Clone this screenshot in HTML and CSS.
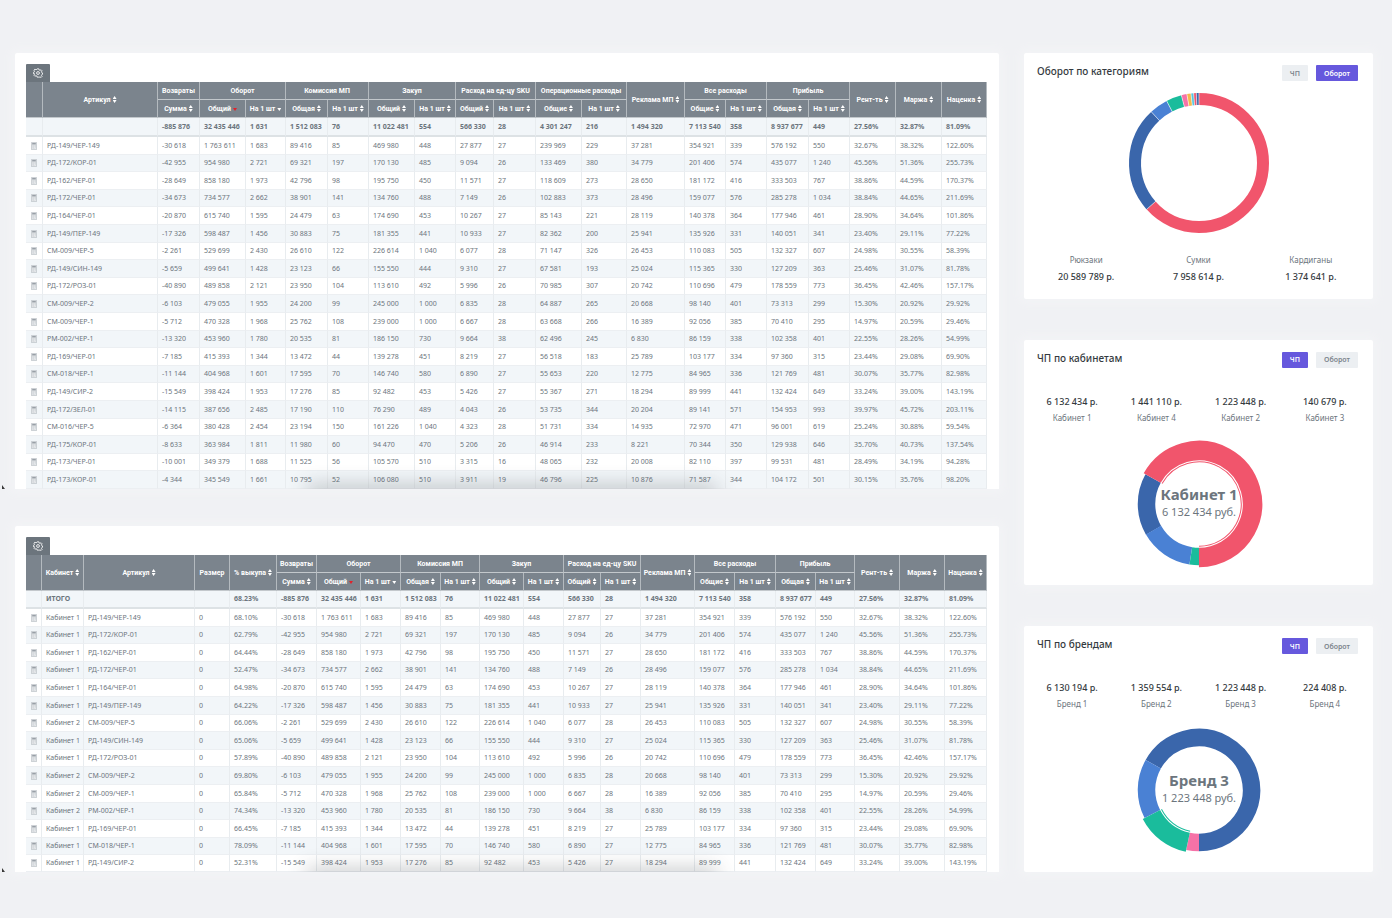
FILE: index.html
```html
<!DOCTYPE html>
<html lang="ru">
<head>
<meta charset="utf-8">
<title>Аналитика продаж</title>
<link rel="stylesheet" href="styles.css">
</head>
<body>
<svg class="sprite" aria-hidden="true">
  <symbol id="gear" viewBox="0 0 24 24">
    <path d="M10 2h4l.7 2.8 2.2.9 2.5-1.5 2.4 2.5-1.5 2.5.9 2.1 1.7.7v3l-1.7.7-.9 2.1 1.5 2.5-2.4 2.5-2.5-1.5-2.2.9L14 22h-4l-.7-2.8-2.2-.9-2.5 1.5-2.4-2.5 1.5-2.5-.9-2.1L1 13.500v-3l1.800-.7.9-2.100-1.500-2.500 2.400-2.500 2.500 1.500 2.200-.9z" fill="none" stroke="currentColor" stroke-width="2" stroke-linejoin="round"/>
    <circle cx="12" cy="12" r="3.400" fill="none" stroke="currentColor" stroke-width="2"/>
  </symbol>
  <symbol id="calc" viewBox="0 0 12 16">
    <rect x=".5" y=".5" width="11" height="15" rx="1" fill="#d3d7db" stroke="#b3b9bf"/>
    <path d="M2.500 3.500h7" stroke="#868e96" stroke-width="2"/>
    <path d="M3 8h1.500M6 8h1.500M3 10.500h1.500M6 10.500h3M3 13h1.500M7 13h2.500" stroke="#f7f9fa" stroke-width="1.300"/>
  </symbol>
</svg>

<main class="page">
  <div class="tables">
    <section class="panel">
      <div class="card table-card">
        <button class="settings" type="button" aria-label="Настройки"><svg><use href="#gear"/></svg></button>
        <table class="grid grid-articles">
          <colgroup><col><col><col><col><col><col><col><col><col><col><col><col><col><col><col><col><col><col><col><col><col></colgroup>
          <thead>
            <tr>
              <th rowspan="2"></th>
              <th rowspan="2"><button class="sort">Артикул</button></th>
              <th>Возвраты</th>
              <th colspan="2">Оборот</th>
              <th colspan="2">Комиссия МП</th>
              <th colspan="2">Закуп</th>
              <th colspan="2">Расход на ед-цу SKU</th>
              <th colspan="2">Операционные расходы</th>
              <th rowspan="2"><button class="sort">Реклама МП</button></th>
              <th colspan="2">Все расходы</th>
              <th colspan="2">Прибыль</th>
              <th rowspan="2"><button class="sort">Рент-ть</button></th>
              <th rowspan="2"><button class="sort">Маржа</button></th>
              <th rowspan="2"><button class="sort">Наценка</button></th>
            </tr>
            <tr>
              <th><button class="sort">Сумма</button></th>
              <th><button class="sort sort-down sort-active">Общий</button></th>
              <th><button class="sort sort-down">На 1 шт</button></th>
              <th><button class="sort">Общая</button></th>
              <th><button class="sort">На 1 шт</button></th>
              <th><button class="sort">Общий</button></th>
              <th><button class="sort">На 1 шт</button></th>
              <th><button class="sort">Общий</button></th>
              <th><button class="sort">На 1 шт</button></th>
              <th><button class="sort">Общие</button></th>
              <th><button class="sort">На 1 шт</button></th>
              <th><button class="sort">Общие</button></th>
              <th><button class="sort">На 1 шт</button></th>
              <th><button class="sort">Общая</button></th>
              <th><button class="sort">На 1 шт</button></th>
            </tr>
          </thead>
          <tbody id="articles"></tbody>
        </table>
      </div>
    </section>

    <section class="panel">
      <div class="card table-card">
        <button class="settings" type="button" aria-label="Настройки"><svg><use href="#gear"/></svg></button>
        <table class="grid grid-cabinets">
          <colgroup><col><col><col><col><col><col><col><col><col><col><col><col><col><col><col><col><col><col><col><col><col><col></colgroup>
          <thead>
            <tr>
              <th rowspan="2"></th>
              <th rowspan="2"><button class="sort">Кабинет</button></th>
              <th rowspan="2"><button class="sort">Артикул</button></th>
              <th rowspan="2">Размер</th>
              <th rowspan="2"><button class="sort">% выкупа</button></th>
              <th>Возвраты</th>
              <th colspan="2">Оборот</th>
              <th colspan="2">Комиссия МП</th>
              <th colspan="2">Закуп</th>
              <th colspan="2">Расход на ед-цу SKU</th>
              <th rowspan="2"><button class="sort">Реклама МП</button></th>
              <th colspan="2">Все расходы</th>
              <th colspan="2">Прибыль</th>
              <th rowspan="2"><button class="sort">Рент-ть</button></th>
              <th rowspan="2"><button class="sort">Маржа</button></th>
              <th rowspan="2"><button class="sort">Наценка</button></th>
            </tr>
            <tr>
              <th><button class="sort">Сумма</button></th>
              <th><button class="sort sort-down sort-active">Общий</button></th>
              <th><button class="sort sort-down">На 1 шт</button></th>
              <th><button class="sort">Общая</button></th>
              <th><button class="sort">На 1 шт</button></th>
              <th><button class="sort">Общий</button></th>
              <th><button class="sort">На 1 шт</button></th>
              <th><button class="sort">Общий</button></th>
              <th><button class="sort">На 1 шт</button></th>
              <th><button class="sort">Общие</button></th>
              <th><button class="sort">На 1 шт</button></th>
              <th><button class="sort">Общая</button></th>
              <th><button class="sort">На 1 шт</button></th>
            </tr>
          </thead>
          <tbody id="cabinets"></tbody>
        </table>
      </div>
    </section>
  </div>

  <aside class="charts">
    <section class="card chart">
      <header class="chart-head">
        <h2>Оборот по категориям</h2>
        <div class="switch"><button type="button">ЧП</button><button type="button" class="on">Оборот</button></div>
      </header>
      <svg class="donut donut-wide" viewBox="-72 -72 144 144" role="img" aria-label="Оборот по категориям">
        <g fill="none" stroke-width="12">
          <circle class="red" r="64" pathLength="360" stroke-dasharray="228.500 360" transform="rotate(-90)"/>
          <circle class="navy" r="64" pathLength="360" stroke-dasharray="88.500 360" transform="rotate(138.500)"/>
          <circle class="blue" r="64" pathLength="360" stroke-dasharray="15.500 360" transform="rotate(227)"/>
          <circle class="green" r="64" pathLength="360" stroke-dasharray="13 360" transform="rotate(242.500)"/>
          <circle class="pink" r="64" pathLength="360" stroke-dasharray="4.600 360" transform="rotate(255.400)"/>
          <circle class="yellow" r="64" pathLength="360" stroke-dasharray="3.400 360" transform="rotate(260)"/>
          <circle class="cyan" r="64" pathLength="360" stroke-dasharray="2.200 360" transform="rotate(263.400)"/>
          <circle class="red" r="64" pathLength="360" stroke-dasharray="2.200 360" transform="rotate(265.600)"/>
          <circle class="navy" r="64" pathLength="360" stroke-dasharray="2.200 360" transform="rotate(267.800)"/>
        </g>
        <g stroke="#fff" stroke-width=".5">
          <path d="M0-57v-14" /><path d="M0-57v-14" transform="rotate(228.500)"/><path d="M0-57v-14" transform="rotate(317)"/>
          <path d="M0-57v-14" transform="rotate(332.500)"/><path d="M0-57v-14" transform="rotate(345.400)"/><path d="M0-57v-14" transform="rotate(350)"/>
          <path d="M0-57v-14" transform="rotate(353.400)"/><path d="M0-57v-14" transform="rotate(355.600)"/><path d="M0-57v-14" transform="rotate(357.800)"/>
        </g>
      </svg>
      <dl class="stats stats-below">
        <div><dt>Рюкзаки</dt><dd>20 589 789 р.</dd></div>
        <div><dt>Сумки</dt><dd>7 958 614 р.</dd></div>
        <div><dt>Кардиганы</dt><dd>1 374 641 р.</dd></div>
      </dl>
    </section>

    <section class="card chart">
      <header class="chart-head">
        <h2>ЧП по кабинетам</h2>
        <div class="switch"><button type="button" class="on">ЧП</button><button type="button">Оборот</button></div>
      </header>
      <dl class="stats stats-above">
        <div><dt>Кабинет 1</dt><dd>6 132 434 р.</dd></div>
        <div><dt>Кабинет 4</dt><dd>1 441 110 р.</dd></div>
        <div><dt>Кабинет 2</dt><dd>1 223 448 р.</dd></div>
        <div><dt>Кабинет 3</dt><dd>140 679 р.</dd></div>
      </dl>
      <svg class="donut" viewBox="-68 -68 136 136" role="img" aria-label="ЧП по кабинетам">
        <g fill="none" stroke-width="17.500">
          <circle class="navy" r="52.500" pathLength="360" stroke-dasharray="59 360" transform="rotate(150)"/>
          <circle class="blue" r="52.500" pathLength="360" stroke-dasharray="51 360" transform="rotate(99)"/>
          <circle class="green" r="52.500" pathLength="360" stroke-dasharray="9 360" transform="rotate(90)"/>
          <circle class="red" r="53.500" stroke-width="19.500" pathLength="360" stroke-dasharray="241 360" transform="rotate(209)"/>
          <circle class="red" r="42.200" stroke-width="1" pathLength="360" stroke-dasharray="241 360" transform="rotate(209)"/>
        </g>
        <text class="donut-name" y="-4">Кабинет 1</text>
        <text class="donut-sum" y="12">6 132 434 руб.</text>
      </svg>
    </section>

    <section class="card chart">
      <header class="chart-head">
        <h2>ЧП по брендам</h2>
        <div class="switch"><button type="button" class="on">ЧП</button><button type="button">Оборот</button></div>
      </header>
      <dl class="stats stats-above">
        <div><dt>Бренд 1</dt><dd>6 130 194 р.</dd></div>
        <div><dt>Бренд 2</dt><dd>1 359 554 р.</dd></div>
        <div><dt>Бренд 3</dt><dd>1 223 448 р.</dd></div>
        <div><dt>Бренд 4</dt><dd>224 408 р.</dd></div>
      </dl>
      <svg class="donut" viewBox="-68 -68 136 136" role="img" aria-label="ЧП по брендам">
        <g fill="none" stroke-width="17.500">
          <circle class="navy" r="52.500" pathLength="360" stroke-dasharray="240.600 360" transform="rotate(209.400)"/>
          <circle class="blue" r="52.500" pathLength="360" stroke-dasharray="56.700 360" transform="rotate(152.700)"/>
          <circle class="pink" r="52.500" pathLength="360" stroke-dasharray="12.100 360" transform="rotate(90)"/>
          <circle class="green" r="53.500" stroke-width="19.500" pathLength="360" stroke-dasharray="50.600 360" transform="rotate(102.100)"/>
          <circle class="green" r="42.200" stroke-width="1" pathLength="360" stroke-dasharray="50.600 360" transform="rotate(102.100)"/>
        </g>
        <text class="donut-name" y="-4">Бренд 3</text>
        <text class="donut-sum" y="12">1 223 448 руб.</text>
      </svg>
    </section>
  </aside>
</main>
<script src="tables.js"></script>
</body>
</html>
```

FILE: styles.css
```css
* { box-sizing: border-box; }

body {
  margin: 0;
  background: #f0f1f4;
  color: #6c757d;
  font-family: "Noto Sans", "Open Sans", sans-serif;
}

button {
  margin: 0;
  padding: 0;
  border: 0;
  background: none;
  color: inherit;
  font: inherit;
  cursor: pointer;
}

.sprite { display: none; }

.page {
  display: grid;
  grid-template-columns: 984fr 349fr;
  gap: 25px;
  padding: 53px 19px 46px 15px;
}

.card {
  background: #fff;
  border-radius: 2px;
  box-shadow: 0 0 10px 4px #f3f4f6;
}

/* Tables */
.tables {
  display: flex;
  flex-direction: column;
  gap: 37px;
  min-width: 0;
}

.panel { position: relative; }

.panel::before {
  content: "";
  position: absolute;
  left: -13px;
  bottom: 0;
  width: 3px;
  height: 4px;
  background: #333;
  clip-path: polygon(0 0, 100% 100%, 0 100%);
}

.table-card {
  position: relative;
  overflow: hidden;
  padding: 11px 12px 0 11px;
  border-radius: 2px 2px 0 0;
}

/* Soft shade rising from the cut edge of the list */
.table-card::after {
  content: "";
  position: absolute;
  left: 30%;
  right: 29%;
  bottom: -8px;
  height: 8px;
  box-shadow: 0 0 20px 3px rgba(60, 66, 72, .32);
  pointer-events: none;
}

.settings {
  display: flex;
  align-items: center;
  justify-content: center;
  width: 24px;
  height: 18px;
  background: #6c757d;
  color: #fff;
  border-radius: 1px 1px 0 0;
}

.settings svg { width: 10px; height: 10px; }

.grid {
  width: 100%;
  table-layout: fixed;
  border-spacing: 0;
  font-size: 7px;
  line-height: 14px;
  white-space: nowrap;
}

.grid tr { height: 18px; }
.grid tbody tr:nth-child(5n + 3),
.grid tbody tr:nth-child(5n + 5),
.grid-cabinets tbody tr:last-child { height: 17px; }
.grid-articles .total { height: 19px; }

.grid th {
  padding: 0;
  background: #7b848d;
  color: #fff;
  font-family: Roboto, "Noto Sans", sans-serif;
  font-weight: 700;
  text-align: center;
  border-right: 1px solid #b4babf;
  border-bottom: 1px solid #c3c8cc;
}

.grid td {
  padding: 0 0 0 4px;
  border-right: 1px solid #e8ecef;
  border-bottom: 1px solid #eceff2;
}

.grid tbody tr:nth-child(odd) { background: #f2f6f9; }

.grid .total td {
  font-weight: 700;
  border-bottom: 2px solid #dde2e5;
}

.sort {
  display: inline-flex;
  align-items: center;
  gap: 2px;
}

.sort::after {
  content: "";
  width: 4px;
  height: 7px;
  background: #fff;
  clip-path: polygon(50% 0, 100% 42%, 0 42%, 0 58%, 100% 58%, 50% 100%, 0 58%, 0 42%);
}

.sort-down::after {
  height: 3px;
  margin-top: 2px;
  clip-path: polygon(0 0, 100% 0, 50% 100%);
}

.sort-active::after { background: #e3202a; }

.calc {
  display: block;
  width: 6px;
  height: 8px;
  margin-left: 1px;
}

.calc svg { display: block; width: 6px; height: 8px; }

.grid-articles col:nth-child(1) { width: 17px; }
.grid-articles col:nth-child(2) { width: 115px; }
.grid-articles col:nth-child(3) { width: 42px; }
.grid-articles col:nth-child(4) { width: 46px; }
.grid-articles col:nth-child(5) { width: 40px; }
.grid-articles col:nth-child(6) { width: 42px; }
.grid-articles col:nth-child(7) { width: 41px; }
.grid-articles col:nth-child(8) { width: 46px; }
.grid-articles col:nth-child(9) { width: 41px; }
.grid-articles col:nth-child(10) { width: 38px; }
.grid-articles col:nth-child(11) { width: 42px; }
.grid-articles col:nth-child(12) { width: 46px; }
.grid-articles col:nth-child(13) { width: 45px; }
.grid-articles col:nth-child(14) { width: 58px; }
.grid-articles col:nth-child(15) { width: 41px; }
.grid-articles col:nth-child(16) { width: 41px; }
.grid-articles col:nth-child(17) { width: 42px; }
.grid-articles col:nth-child(18) { width: 41px; }
.grid-articles col:nth-child(19) { width: 46px; }
.grid-articles col:nth-child(20) { width: 46px; }
.grid-articles col:nth-child(21) { width: 45px; }

.grid-cabinets col:nth-child(1) { width: 16px; }
.grid-cabinets col:nth-child(2) { width: 42px; }
.grid-cabinets col:nth-child(3) { width: 111px; }
.grid-cabinets col:nth-child(4) { width: 35px; }
.grid-cabinets col:nth-child(5) { width: 47px; }
.grid-cabinets col:nth-child(6) { width: 40px; }
.grid-cabinets col:nth-child(7) { width: 44px; }
.grid-cabinets col:nth-child(8) { width: 40px; }
.grid-cabinets col:nth-child(9) { width: 40px; }
.grid-cabinets col:nth-child(10) { width: 39px; }
.grid-cabinets col:nth-child(11) { width: 44px; }
.grid-cabinets col:nth-child(12) { width: 40px; }
.grid-cabinets col:nth-child(13) { width: 37px; }
.grid-cabinets col:nth-child(14) { width: 40px; }
.grid-cabinets col:nth-child(15) { width: 54px; }
.grid-cabinets col:nth-child(16) { width: 40px; }
.grid-cabinets col:nth-child(17) { width: 41px; }
.grid-cabinets col:nth-child(18) { width: 40px; }
.grid-cabinets col:nth-child(19) { width: 39px; }
.grid-cabinets col:nth-child(20) { width: 45px; }
.grid-cabinets col:nth-child(21) { width: 45px; }
.grid-cabinets col:nth-child(22) { width: 42px; }

/* Charts */
.charts {
  display: flex;
  flex-direction: column;
  gap: 41px;
}

.chart { flex: 1; }

.chart-head {
  display: flex;
  justify-content: space-between;
  align-items: flex-start;
  padding: 12px 15px 0 13px;
}

.chart-head h2 {
  margin: 0;
  color: #343a40;
  font-size: 10px;
  line-height: 12px;
  font-weight: 500;
}

.switch { display: flex; gap: 8px; }

.switch button {
  height: 16px;
  padding: 0 8px;
  border-radius: 1px;
  background: #eceff2;
  color: #7c858d;
  font-size: 7px;
  font-weight: 600;
}

.switch .on { background: #6658dd; color: #fff; }

.donut {
  display: block;
  width: 136px;
  height: 136px;
  margin: 12px auto 0;
}

.donut-wide { width: 144px; height: 144px; margin-top: 10px; }

.red { stroke: #f1556c; }
.navy { stroke: #3a66ab; }
.blue { stroke: #4a81d4; }
.green { stroke: #1abc9c; }
.pink { stroke: #f672a7; }
.yellow { stroke: #f7b84b; }
.cyan { stroke: #4fc6e1; }

.donut text { fill: #6c757d; text-anchor: middle; }
.donut-name { font-size: 15px; font-weight: 700; }
.donut-sum { font-size: 11px; }

.stats {
  display: flex;
  margin: 0;
  padding: 0 6px;
  text-align: center;
}

.stats div { flex: 1; display: flex; flex-direction: column; }
.stats-below { margin-top: 18px; }
.stats-above { margin-top: 24px; }
.stats-above dt { order: 2; }

.stats dt { font-size: 8px; line-height: 14px; }
.stats-above dt { line-height: 12px; }

.stats dd {
  margin: 0;
  color: #343a40;
  font-size: 9px;
  line-height: 20px;
  font-weight: 500;
}
```

FILE: tables.js
```js
// article | returns | turnover x2 | commission x2 | purchase x2 | SKU x2 | operations x2 | ads | expenses x2 | profit x2 | profitability | margin | markup
const rows = `
|-885 876|32 435 446|1 631|1 512 083|76|11 022 481|554|566 330|28|4 301 247|216|1 494 320|7 113 540|358|8 937 677|449|27.56%|32.87%|81.09%
РД-149/ЧЕР-149|-30 618|1 763 611|1 683|89 416|85|469 980|448|27 877|27|239 969|229|37 281|354 921|339|576 192|550|32.67%|38.32%|122.60%
РД-172/КОР-01|-42 955|954 980|2 721|69 321|197|170 130|485|9 094|26|133 469|380|34 779|201 406|574|435 077|1 240|45.56%|51.36%|255.73%
РД-162/ЧЕР-01|-28 649|858 180|1 973|42 796|98|195 750|450|11 571|27|118 609|273|28 650|181 172|416|333 503|767|38.86%|44.59%|170.37%
РД-172/ЧЕР-01|-34 673|734 577|2 662|38 901|141|134 760|488|7 149|26|102 883|373|28 496|159 077|576|285 278|1 034|38.84%|44.65%|211.69%
РД-164/ЧЕР-01|-20 870|615 740|1 595|24 479|63|174 690|453|10 267|27|85 143|221|28 119|140 378|364|177 946|461|28.90%|34.64%|101.86%
РД-149/ПЕР-149|-17 326|598 487|1 456|30 883|75|181 355|441|10 933|27|82 362|200|25 941|135 926|331|140 051|341|23.40%|29.11%|77.22%
СМ-009/ЧЕР-5|-2 261|529 699|2 430|26 610|122|226 614|1 040|6 077|28|71 147|326|26 453|110 083|505|132 327|607|24.98%|30.55%|58.39%
РД-149/СИН-149|-5 659|499 641|1 428|23 123|66|155 550|444|9 310|27|67 581|193|25 024|115 365|330|127 209|363|25.46%|31.07%|81.78%
РД-172/РОЗ-01|-40 890|489 858|2 121|23 950|104|113 610|492|5 996|26|70 985|307|20 742|110 696|479|178 559|773|36.45%|42.46%|157.17%
СМ-009/ЧЕР-2|-6 103|479 055|1 955|24 200|99|245 000|1 000|6 835|28|64 887|265|20 668|98 140|401|73 313|299|15.30%|20.92%|29.92%
СМ-009/ЧЕР-1|-5 712|470 328|1 968|25 762|108|239 000|1 000|6 667|28|63 668|266|16 389|92 056|385|70 410|295|14.97%|20.59%|29.46%
РМ-002/ЧЕР-1|-13 320|453 960|1 780|20 535|81|186 150|730|9 664|38|62 496|245|6 830|86 159|338|102 358|401|22.55%|28.26%|54.99%
РД-169/ЧЕР-01|-7 185|415 393|1 344|13 472|44|139 278|451|8 219|27|56 518|183|25 789|103 177|334|97 360|315|23.44%|29.08%|69.90%
СМ-018/ЧЕР-1|-11 144|404 968|1 601|17 595|70|146 740|580|6 890|27|55 653|220|12 775|84 965|336|121 769|481|30.07%|35.77%|82.98%
РД-149/СИР-2|-15 549|398 424|1 953|17 276|85|92 482|453|5 426|27|55 367|271|18 294|89 999|441|132 424|649|33.24%|39.00%|143.19%
РД-172/ЗЕЛ-01|-14 115|387 656|2 485|17 190|110|76 290|489|4 043|26|53 735|344|20 204|89 141|571|154 953|993|39.97%|45.72%|203.11%
СМ-016/ЧЕР-5|-6 364|380 428|2 454|23 194|150|161 226|1 040|4 323|28|51 731|334|14 935|72 970|471|96 001|619|25.24%|30.88%|59.54%
РД-175/КОР-01|-8 633|363 984|1 811|11 980|60|94 470|470|5 206|26|46 914|233|8 221|70 344|350|129 938|646|35.70%|40.73%|137.54%
РД-173/ЧЕР-01|-10 001|349 379|1 688|11 525|56|105 570|510|3 315|16|48 065|232|20 008|82 110|397|99 531|481|28.49%|34.19%|94.28%
РД-173/КОР-01|-4 344|345 549|1 661|10 795|52|106 080|510|3 911|19|46 796|225|10 876|71 587|344|104 172|501|30.15%|35.76%|98.20%
`.trim().split("\n").map((line) => line.split("|"));

// cabinet number and buyout share for each row of the second table
const buyout = [
  ["", "68.23%"], [1, "68.10%"], [1, "62.79%"], [1, "64.44%"], [1, "52.47%"], [1, "64.98%"],
  [1, "64.22%"], [2, "66.06%"], [1, "65.06%"], [1, "57.89%"], [2, "69.80%"], [2, "65.84%"],
  [2, "74.34%"], [1, "66.45%"], [1, "78.09%"], [1, "52.31%"],
];

const calcButton = '<button class="calc" type="button" aria-label="Калькулятор"><svg><use href="#calc"/></svg></button>';

function renderRow(cells, isTotal) {
  const first = isTotal ? "" : calcButton;
  const body = cells.map((cell) => `<td>${cell}</td>`).join("");
  return `<tr${isTotal ? ' class="total"' : ""}><td>${first}</td>${body}</tr>`;
}

document.getElementById("articles").innerHTML =
  rows.map((row, i) => renderRow(row, i === 0)).join("");

document.getElementById("cabinets").innerHTML = buyout.map(([cabinet, share], i) => {
  const [article, ...values] = rows[i];
  values.splice(9, 2);
  const lead = i === 0 ? ["ИТОГО", "", ""] : [`Кабинет ${cabinet}`, article, "0"];
  return renderRow([...lead, share, ...values], i === 0);
}).join("");
```
